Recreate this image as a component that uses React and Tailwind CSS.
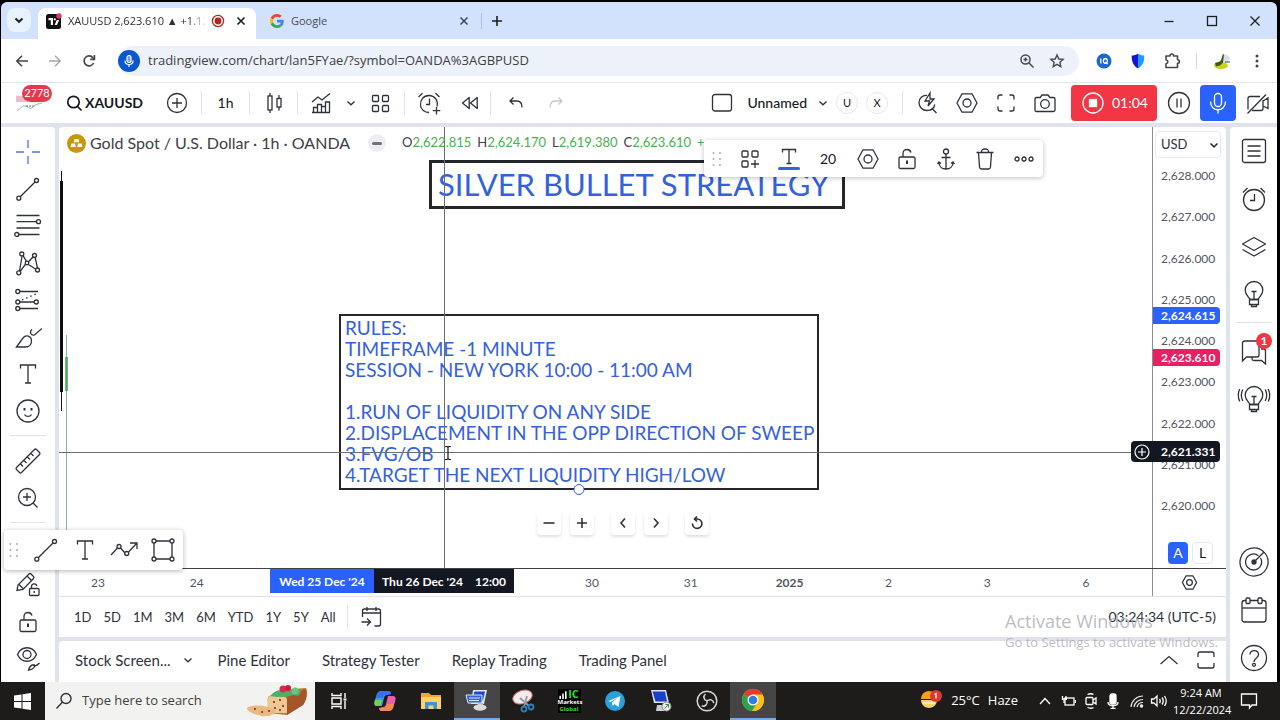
import React from "react";

const INK = "#2f323a";

function Icon({ w = 28, h = 28, sw = 1.3, color = INK, className = "", children }) {
  return (
    <svg
      width={w}
      height={h}
      viewBox={`0 0 ${w} ${h}`}
      fill="none"
      stroke={color}
      strokeWidth={sw}
      className={`shrink-0 ${className}`}
      aria-hidden="true"
    >
      {children}
    </svg>
  );
}

function IconButton({ label, className = "", children }) {
  return (
    <button type="button" aria-label={label} className={`flex shrink-0 items-center justify-center ${className}`}>
      {children}
    </button>
  );
}

function Chevron({ className = "", sw = 1.3, color = INK }) {
  return (
    <Icon w={10} h={8} sw={sw} color={color} className={className}>
      <path d="M1.5 2.5 5 5.8l3.5-3.3" />
    </Icon>
  );
}

function Divider({ className = "" }) {
  return <div className={`h-6 w-px shrink-0 bg-[#e0e3eb] ${className}`} />;
}

/* ---------- shared drawings ---------- */

const HexGear = ({ s = 24 }) => (
  <svg width={s} height={s} viewBox="0 0 24 24" fill="none" stroke={INK} strokeWidth={s < 20 ? 1.8 : 1.3} className="shrink-0" aria-hidden="true">
    <path d="M7 2.8h10l5 9.2-5 9.2H7L2 12z" strokeLinejoin="round" />
    <circle cx="12" cy="12" r="4" />
  </svg>
);

const LineTool = () => (
  <Icon>
    <path d="M6.2 21.8 20.8 7.2" />
    <circle cx="4.8" cy="23.2" r="2" />
    <circle cx="22.5" cy="5.5" r="2" />
  </Icon>
);

const TextTool = () => (
  <Icon>
    <path d="M6.5 8.5V5h15v3.5M14 5v18M11 23h6" />
  </Icon>
);

const Padlock = () => (
  <Icon w={22} h={26}>
    <rect x="3" y="11" width="16" height="11.5" rx="1.5" />
    <path d="M7 11V7.500C7 5 8.800 3.500 11 3.500c2 0 3.500 1.200 4 3" />
    <path d="M11 14.500v3.500" strokeWidth="2" />
  </Icon>
);

const Grip = () => (
  <svg width="10" height="16" viewBox="0 0 10 16" fill="#a9adb8" className="shrink-0" aria-hidden="true">
    {[2, 8, 14].map((y) => (
      <g key={y}>
        <circle cx="1.5" cy={y} r="1" />
        <circle cx="8" cy={y} r="1" />
      </g>
    ))}
  </svg>
);

const Bulb = ({ waves }) => (
  <Icon w={34} h={30}>
    <path d="M13 20.500c-.3-1.800-4.800-4-4.800-9.200C8.200 6.300 12.200 2.500 17 2.500s8.800 3.800 8.800 8.800c0 5.200-4.500 7.400-4.800 9.200z" />
    <path d="M12.500 20.500h9v5h-9zM14.500 25.500v2h5v-2M14.500 12.500h5M17 12.500v8" />
    {waves && <path d="M5.800 5.500c-1.800 3.300-1.800 8 0 11.500M2.800 5c-2 3.500-2 9 0 12.500M28.200 5.500c1.800 3.300 1.800 8 0 11.500M31.200 5c2 3.500 2 9 0 12.500" />}
  </Icon>
);

/* ---------- browser chrome ---------- */

function TabStrip() {
  return (
    <div className="flex h-[37px] items-end rounded-t-md bg-[#d3e2fc]">
      <IconButton label="Search tabs" className="mb-[7px] ml-1.5 size-6 rounded-lg bg-[#e8f1fe]">
        <Chevron sw={2} color="#1f1f1f" />
      </IconButton>
      <div className="ml-[7px] flex h-[31px] w-[218px] items-center rounded-t-lg bg-white pb-[5px] pl-2">
        <svg width="16" height="16" viewBox="0 0 16 16" className="shrink-0" aria-hidden="true">
          <rect y="1" width="15" height="15" rx="2.5" fill="#111" />
          <path d="M2.500 5H7v7H4.800V7.300H2.500zM10.500 7.500 8.700 12h2.200l2.300-5h-2z" fill="#fff" />
          <circle cx="8.800" cy="6.300" r="1.100" fill="#fff" />
          <circle cx="13" cy="3" r="2.700" fill="#e9307c" />
        </svg>
        <span className="ml-1.5 w-[138px] overflow-hidden text-[11px] whitespace-nowrap text-[#303134] [mask-image:linear-gradient(to_right,black_88%,transparent)]">
          XAUUSD 2,623.610 ▲ +1.12
        </span>
        <svg width="14" height="14" viewBox="0 0 14 14" className="ml-[5px] shrink-0" aria-hidden="true">
          <circle cx="7" cy="7" r="5.600" fill="none" stroke="#b3261e" strokeWidth="1.300" />
          <circle cx="7" cy="7" r="3.400" fill="#b3261e" />
        </svg>
        <IconButton label="Close tab" className="ml-2 size-4">
          <Icon w={10} h={10} sw={1.6} color="#1f1f1f"><path d="m1.500 1.500 7 7m0-7-7 7" /></Icon>
        </IconButton>
      </div>
      <div className="ml-[14px] flex h-[31px] w-[212px] items-center pb-[5px]">
        <svg width="14" height="14" viewBox="0 0 48 48" className="shrink-0" aria-hidden="true">
          <path fill="#EA4335" d="M24 9.500c3.540 0 6.710 1.220 9.210 3.600l6.850-6.850C35.900 2.380 30.470 0 24 0 14.620 0 6.510 5.380 2.560 13.220l7.980 6.190C12.430 13.720 17.740 9.500 24 9.500z" />
          <path fill="#4285F4" d="M46.980 24.550c0-1.570-.15-3.090-.38-4.550H24v9.020h12.940c-.58 2.960-2.260 5.480-4.780 7.180l7.730 6c4.510-4.180 7.090-10.360 7.090-17.650z" />
          <path fill="#FBBC05" d="M10.530 28.590c-.48-1.450-.76-2.990-.76-4.590s.27-3.140.76-4.590l-7.980-6.190C.92 16.460 0 20.120 0 24c0 3.880.92 7.540 2.560 10.780z" />
          <path fill="#34A853" d="M24 48c6.480 0 11.930-2.130 15.890-5.810l-7.730-6c-2.150 1.450-4.920 2.300-8.160 2.300-6.260 0-11.570-4.220-13.470-9.910l-7.980 6.190C6.510 42.620 14.620 48 24 48z" />
        </svg>
        <span className="ml-[7px] text-[11px] text-[#474b54]">Google</span>
        <IconButton label="Close tab" className="mr-[9px] ml-auto size-4">
          <Icon w={10} h={10} sw={1.5} color="#3c4660"><path d="m1.500 1.500 7 7m0-7-7 7" /></Icon>
        </IconButton>
        <div className="h-4 w-px bg-[#a8c1ee]" />
      </div>
      <IconButton label="New tab" className="mb-[10px] ml-[7px] size-4">
        <Icon w={12} h={12} sw={1.6} color="#1f1f1f"><path d="M6 1v10M1 6h10" /></Icon>
      </IconButton>
      <div className="mb-[10px] ml-auto flex gap-[27px] pr-[14px]">
        <IconButton label="Minimize" className="size-4"><Icon w={12} h={12} color="#1f1f1f"><path d="M1.500 6.500h9" /></Icon></IconButton>
        <IconButton label="Maximize" className="size-4"><Icon w={12} h={12} color="#1f1f1f"><rect x="1.5" y="1.5" width="9" height="9" /></Icon></IconButton>
        <IconButton label="Close" className="size-4"><Icon w={12} h={12} color="#1f1f1f"><path d="m1.500 1.500 9 9m0-9-9 9" /></Icon></IconButton>
      </div>
    </div>
  );
}

function AddressBar() {
  return (
    <div className="flex h-11 items-center border-b border-[#e3e5e8] bg-white pt-px">
      <IconButton label="Back" className="ml-[13px] size-4">
        <Icon w={14} h={14} sw={1.6} color="#474747"><path d="M13 7H2M7 1.800 1.800 7 7 12.200" /></Icon>
      </IconButton>
      <IconButton label="Forward" className="ml-[17px] size-4">
        <Icon w={14} h={14} sw={1.4} color="#a5a7aa"><path d="M1 7h11M7 1.800 12.200 7 7 12.200" /></Icon>
      </IconButton>
      <IconButton label="Reload" className="ml-[18px] size-4">
        <Icon w={14} h={14} sw={1.7} color="#474747">
          <path d="M11.600 9A5 5 0 1 1 11 3.800L12 5" /><path d="M12.400 1v4.300H8.200" />
        </Icon>
      </IconButton>
      <div className="ml-[21px] flex h-[30px] flex-1 items-center rounded-full bg-[#edf1fa]">
        <span className="flex size-[22px] shrink-0 items-center justify-center rounded-full bg-[#0b57d0]">
          <Icon w={14} h={14} sw={1.2} color="#fff">
            <rect x="5" y="1.5" width="4" height="7" rx="2" fill="#6f9be8" /><path d="M3 6.500c0 5.300 8 5.300 8 0M7 10.500V13" />
          </Icon>
        </span>
        <input
          aria-label="Address"
          defaultValue="tradingview.com/chart/lan5FYae/?symbol=OANDA%3AGBPUSD"
          className="ml-[8px] min-w-0 flex-1 bg-transparent text-[13px] text-[#3c4043] outline-none"
        />
        <Icon w={16} h={16} sw={1.5} color="#474747" className="mr-[14px]">
          <circle cx="6.500" cy="6.500" r="4.500" /><path d="m10 10 4.500 4.500M4.500 6.500h4M6.500 4.500v4" />
        </Icon>
        <Icon w={16} h={16} sw={1.4} color="#474747" className="mr-[14px]">
          <path d="m8 2 1.800 4 4.300.4-3.200 2.900.9 4.300L8 11.400l-3.800 2.200.9-4.300-3.200-2.900L6.200 6z" />
        </Icon>
      </div>
      <svg width="16" height="16" viewBox="0 0 16 16" className="ml-[17px] shrink-0" aria-hidden="true">
        <circle cx="8" cy="8" r="7.500" fill="#1b66d2" />
        <path d="M4.800 5.500v5M9.800 5.500c-3.200 0-3.200 4.800-.5 4.800s2.700-4.800 0-4.800M9.500 9l2 2" stroke="#fff" strokeWidth="1.300" fill="none" />
      </svg>
      <svg width="16" height="16" viewBox="0 0 16 16" className="ml-[18px] shrink-0" aria-hidden="true">
        <path d="M8 .8c2 1.300 4 1.700 6.300 1.800 0 6-1.200 10-6.300 12.800z" fill="#1f9bff" />
        <path d="M8 .8C6 2.100 4 2.500 1.700 2.600c0 6 1.200 10 6.300 12.800z" fill="#1414d8" />
      </svg>
      <Icon w={18} h={18} sw={1.6} color="#474747" className="ml-[17px]">
        <path d="M3 4h4c0-2.600 3.600-2.600 3.600 0h3.900v3.700c2.500 0 2.500 3.600 0 3.600v4.200H3v-3.800c2.500-.4 2.500-3.500 0-3.900z" strokeLinejoin="round" />
      </Icon>
      <div className="ml-[15px] h-4 w-px bg-[#c9d8ef]" />
      <svg width="18" height="18" viewBox="0 0 18 18" className="ml-4 shrink-0" aria-hidden="true">
        <path d="M9 3c3-2 7 0 8 4l-4 4-5-1z" fill="#dcdde6" />
        <ellipse cx="8" cy="13.500" rx="7" ry="3.500" fill="#c9d414" />
        <path d="M2 11c2-1 4 0 6-3l2-6 1 .5-1 8-3 3-4 1z" fill="#3a5a1c" />
        <path d="M12 10h5" stroke="#777aa5" strokeWidth="1.500" />
      </svg>
      <IconButton label="Menu" className="mr-3 ml-[18px] size-4">
        <svg width="4" height="14" viewBox="0 0 4 14" fill="#474747"><circle cx="2" cy="2" r="1.500" /><circle cx="2" cy="7" r="1.500" /><circle cx="2" cy="12" r="1.500" /></svg>
      </IconButton>
    </div>
  );
}

/* ---------- chart application ---------- */

function TopToolbar() {
  return (
    <header className="flex h-10 items-center bg-white font-['Lato',sans-serif] text-[#17191f]">
      <div className="relative flex h-full w-14 shrink-0 items-center">
        <svg width="28" height="18" viewBox="0 0 28 18" className="ml-[15px]" aria-hidden="true">
          <rect x="0" y="2" width="12" height="6" fill="#f2b9c6" />
          <path d="M1 16c4 0 4-5 8-4s5 4 8 1 5-3 9-4" stroke="#8fb7a8" fill="none" />
          <path d="M10 12h8" stroke="#777" strokeDasharray="2 1" />
        </svg>
        <span className="absolute top-0.5 left-[21px] flex h-[17px] w-[30px] items-center justify-center rounded-full bg-[#e63a4c] text-[11px] text-white">2778</span>
      </div>
      <button type="button" className="flex h-full w-24 shrink-0 items-center gap-[3px] pl-[9px] text-sm font-bold">
        <Icon w={16} h={18} sw={1.7} color="#17191f"><circle cx="7.500" cy="8" r="5.700" /><path d="m11.500 12.500 4 4" /></Icon>
        XAUUSD
      </button>
      <IconButton label="Compare symbols" className="w-12">
        <Icon w={22} h={22}><circle cx="11" cy="11" r="9.500" /><path d="M11 6v10M6 11h10" /></Icon>
      </IconButton>
      <Divider />
      <button type="button" className="w-[47px] shrink-0 text-sm">1h</button>
      <Divider />
      <IconButton label="Candles" className="w-[47px]">
        <Icon w={18} h={22}>
          <path d="M5 1v3M5 18v3M14 3v3.500M14 15v3.500" /><rect x="3" y="4" width="4" height="14" /><rect x="12" y="6.500" width="4" height="8.500" />
        </Icon>
      </IconButton>
      <Divider />
      <IconButton label="Indicators" className="w-[46px]">
        <Icon w={22} h={22}>
          <path d="m2 10 6-5 4 3 8-6.500M2 20.500h18M3.500 20.500v-5h4v5M7.500 15.500v-3h4v8M11.500 14.500h4v6M15.500 14.500V10h4v10.500" />
        </Icon>
      </IconButton>
      <IconButton label="Favorite indicators" className="h-8 w-[14px]"><Chevron /></IconButton>
      <IconButton label="Templates" className="w-[46px]">
        <Icon w={20} h={20}>
          {[1.5, 11.5].map((x) => [1.5, 11.5].map((y) => <rect key={`${x}-${y}`} x={x} y={y + 1} width="6" height="6" rx="1" />))}
        </Icon>
      </IconButton>
      <Divider />
      <IconButton label="Create alert" className="w-[47px]">
        <Icon w={26} h={26}>
          <path d="M21 16.500c1.500-6-2.500-11-8-11s-9 4.500-8.500 10c.5 4 4 7 8.500 7M13.500 8.500v6H10M2.500 7 6.500 3.200M23.500 7l-4-3.800M20.500 17v7.500M16.800 20.700h7.500" />
        </Icon>
      </IconButton>
      <IconButton label="Replay" className="w-[38px]">
        <Icon w={20} h={18}><path d="M8.200 3.500v11L1.500 9zM16.200 3.500v11L9.500 9z" strokeLinejoin="round" /></Icon>
      </IconButton>
      <Divider />
      <IconButton label="Undo" className="ml-[2px] w-[46px]">
        <Icon w={16} h={16}><path d="M5.500 2.500 2 6l3.500 3.500M2 6h7c3.500 0 5 2 5 6.500" /></Icon>
      </IconButton>
      <IconButton label="Redo" className="w-[34px]">
        <Icon w={16} h={16} color="#c4c7cf"><path d="M10.500 2.500 14 6l-3.500 3.500M14 6H7c-3.500 0-5 2-5 6.500" /></Icon>
      </IconButton>

      <div className="ml-auto flex h-full items-center">
        <IconButton label="Layout" className="w-6">
          <Icon w={22} h={20}><rect x="1.5" y="1.5" width="19" height="16.500" rx="2.500" /></Icon>
        </IconButton>
        <button type="button" className="ml-[13px] flex items-center gap-[11px] text-sm font-medium">
          Unnamed
          <Chevron />
        </button>
        {["U", "X"].map((k) => (
          <button key={k} type="button" className="ml-2 flex size-[22px] items-center justify-center rounded-full border border-[#e6e8ee] text-[11px]">
            {k}
          </button>
        ))}
        <Divider className="mr-[5px] ml-[14px]" />
        <IconButton label="Quick search" className="w-[39px]">
          <Icon w={24} h={24}>
            <path d="M11 4.500c-4.500-.5-8 2.700-8 7 0 4.500 3.500 8 8 8 4 0 7-2.500 7.800-6M16 17.500l4.500 4.500M14 2 9 10h4.500l-1.500 5L18 8h-4z" />
          </Icon>
        </IconButton>
        <IconButton label="Chart settings" className="w-[39px]"><HexGear /></IconButton>
        <IconButton label="Fullscreen" className="w-[39px]">
          <Icon w={20} h={20}><path d="M2 6.500V4q0-2 2-2h2.500M13.500 2H16q2 0 2 2v2.500M18 13.500V16q0 2-2 2h-2.500M6.500 18H4q-2 0-2-2v-2.500" /></Icon>
        </IconButton>
        <IconButton label="Take a snapshot" className="w-[39px]">
          <Icon w={24} h={20}>
            <path d="M3.500 4.500h3.700L9 2h6l1.800 2.500h3.700q1.500 0 1.500 1.500v11q0 1.500-1.500 1.500h-17Q2 18.500 2 17V6q0-1.500 1.500-1.500z" /><circle cx="12" cy="11" r="4.300" />
          </Icon>
        </IconButton>
        <button type="button" className="ml-[7px] flex h-9 w-[86px] items-center gap-2 rounded bg-[#f23645] pl-[11px] text-sm text-white">
          <Icon w={22} h={22} color="#fff"><circle cx="11" cy="11" r="10" /><rect x="7.500" y="7.500" width="7" height="7" fill="#fff" /></Icon>
          01:04
        </button>
        <IconButton label="Pause recording" className="w-[43px]">
          <Icon w={24} h={24}><circle cx="12" cy="12" r="10.500" /><path d="M10 7.500v9M14 7.500v9" /></Icon>
        </IconButton>
        <IconButton label="Microphone" className="h-9 w-9 rounded bg-[#2962ff]">
          <Icon w={20} h={22} color="#fff"><rect x="6.500" y="1.500" width="7" height="13" rx="3.500" /><path d="M2.500 9.500c0 11 15 11 15 0M10 18v3.500" /></Icon>
        </IconButton>
        <IconButton label="Camera off" className="ml-[3px] w-[38px]">
          <Icon w={24} h={24}><path d="M14 5.500H4q-2 0-2 2v11M6 19.500h9q2 0 2-2V9M17 10l5-3v10.500l-5-2.500M1.500 22.500 20 3.500" /></Icon>
        </IconButton>
      </div>
    </header>
  );
}

const leftToolsTop = [
  ["Cross", <Icon color="#4f74d8" key="i"><path d="M14 2v8M14 18v8M2 14h8M18 14h8" /></Icon>],
  ["Trend line", <LineTool key="i" />],
  ["Fib retracement", (
    <Icon key="i"><path d="M2.500 3.500h23M2.500 9.700h20M2.500 16h23M4.500 22.500h21" /><circle cx="24.500" cy="9.700" r="2" /><circle cx="2.800" cy="22.500" r="2" /></Icon>
  )],
  ["Pattern", (
    <Icon key="i">
      <path d="M5.500 22 8 7.500M9.200 6.800l3.300 5.700M14.500 12.800 19.500 7.500M21 8l2.500 11M22 20.200l-8-5M11.700 15 6.300 22.200" />
      <circle cx="4.800" cy="23.800" r="2" /><circle cx="7.800" cy="5" r="2" /><circle cx="20.500" cy="6.500" r="2" /><circle cx="23.500" cy="21" r="2" /><circle cx="13" cy="14" r="1.800" />
    </Icon>
  )],
  ["Prediction", (
    <Icon key="i">
      <path d="M5.500 5.500H24M5.500 16h15M5.500 22.500H24" /><path d="m8 14 15-6.500" strokeDasharray="1.500 3" />
      <circle cx="3.800" cy="5.500" r="2" /><circle cx="3.800" cy="16" r="2" /><circle cx="22.300" cy="16" r="2" /><circle cx="3.800" cy="22.500" r="2" />
    </Icon>
  )],
  ["Brush", (
    <Icon key="i">
      <path d="M2.500 24 9 15c3-4 8.500-2 8.500 3 0 3.500-2.500 6-6 6z" /><path d="M18 6.500c-3 2.500-1 6.500 2.500 5.500L28 5.500" />
    </Icon>
  )],
  ["Text", <TextTool key="i" />],
  ["Icons", (
    <Icon key="i"><circle cx="14" cy="14" r="11" /><path d="M10.500 17.500c1.500 2.500 5.500 2.500 7 0" /><path d="M10.500 11v2.500M17.500 11v2.500" strokeWidth="2" /></Icon>
  )],
];

function LeftToolbar() {
  return (
    <aside className="flex w-[54px] shrink-0 flex-col items-center rounded-tr bg-white pt-1.5">
      {leftToolsTop.map(([label, icon]) => (
        <IconButton key={label} label={label} className="h-[37px] w-10">{icon}</IconButton>
      ))}
      <div className="my-1.5 h-px w-9 bg-[#e0e3eb]" />
      <IconButton label="Measure" className="h-[37px] w-10">
        <Icon><path d="M2.500 20.500 20.500 2.500q1-1 2 0l3 3q1 1 0 2L7.500 25.500q-1 1-2 0l-3-3q-1-1 0-2zM6.500 17l2.500 2.500M10 13.500l2.500 2.500M13.500 10l2.500 2.500M17 6.500 19.500 9" /></Icon>
      </IconButton>
      <IconButton label="Zoom in" className="h-[37px] w-10">
        <Icon><circle cx="13" cy="13" r="8.500" /><path d="m19 19 4.500 4.500M13 9v8M9 13h8" /></Icon>
      </IconButton>
      <div className="my-1.5 h-px w-9 bg-[#e0e3eb]" />
      <IconButton label="Magnet" className="h-[37px] w-10">
        <Icon><path d="M7 6v8c0 9 14 9 14 0V6h-4v8c0 4-6 4-6 0V6z" /></Icon>
      </IconButton>
      <IconButton label="Lock drawings tool" className="h-[37px] w-10">
        <Icon>
          <path d="M3 19.500 4 14 15 3q1-1 2 0l2.500 2.500q1 1 0 2L9 18.500zM13 5l4.500 4.500M5 13.500l4 4" />
          <rect x="15.500" y="17.500" width="9.500" height="7" rx="1" /><path d="M17.500 17.500v-2c0-3.500 5-3.500 5.300-.5M20.200 20v2" />
        </Icon>
      </IconButton>
      <IconButton label="Lock all drawings" className="h-[37px] w-10"><Padlock /></IconButton>
      <IconButton label="Hide drawings" className="h-[37px] w-10">
        <Icon>
          <path d="M3.500 9.500c4-9 15-9 19 0-4 9-15 9-19 0z" /><circle cx="13" cy="9.500" r="4" />
          <path d="M14.500 25c1-3 2.500-5 4.500-5 3 1 1 4.500-4.500 5zM20 19c0 2.500 2 2.500 5.500-1" />
        </Icon>
      </IconButton>
    </aside>
  );
}

/* Slots without a text lie under the highlighted date range. */
const timeLabels = ["23", "24", "", "", "", "30", "31", "2025", "2", "3", "6"];
const prices = ["2,628.000", "2,627.000", "2,626.000", "2,625.000", "2,624.000", "2,623.000", "2,622.000", "2,621.000", "2,620.000"];

const ruleLines = [
  "RULES:",
  "TIMEFRAME -1 MINUTE",
  "SESSION - NEW YORK 10:00 - 11:00 AM",
  "\u00a0",
  "1.RUN OF LIQUIDITY ON ANY SIDE",
  "2.DISPLACEMENT IN THE OPP DIRECTION OF SWEEP",
  "3.FVG/OB",
  "4.TARGET THE NEXT LIQUIDITY HIGH/LOW",
];

const ohlc = [["O", "2,622.815"], ["H", "2,624.170"], ["L", "2,619.380"], ["C", "2,623.610"]];

function NavButton({ label, className = "", children }) {
  return (
    <IconButton label={label} className={`size-6 rounded bg-white shadow-[0_2px_3px_rgba(0,0,0,0.12)] ${className}`}>
      <Icon w={14} h={14} sw={1.6}>{children}</Icon>
    </IconButton>
  );
}

function DrawingToolbar() {
  return (
    <div className="absolute top-[13px] left-[645px] z-20 flex h-[37px] w-[339px] items-center rounded bg-white pl-2 shadow-[0_1px_5px_rgba(0,0,0,0.25)]">
      <Grip />
      <IconButton label="Drawing templates" className="ml-2 w-[39px]">
        <Icon w={20} h={20}>
          <rect x="2" y="2" width="6" height="6" rx="1" /><rect x="12" y="2" width="6" height="6" rx="1" /><rect x="2" y="12" width="6" height="6" rx="1" /><path d="M15 11v8M11 15h8" />
        </Icon>
      </IconButton>
      <IconButton label="Text color" className="w-[39px] flex-col">
        <Icon w={22} h={20}><path d="M4.500 5.500v-3h13v3M11 2.500v14M8.500 16.500h5" /></Icon>
        <span className="h-[3px] w-[22px] rounded-sm bg-[#3461e0]" />
      </IconButton>
      <button type="button" className="w-10 shrink-0 text-sm text-[#17191f]">20</button>
      <IconButton label="Settings" className="w-[39px]"><HexGear /></IconButton>
      <IconButton label="Lock" className="w-[39px]"><Padlock /></IconButton>
      <IconButton label="Anchor" className="w-[39px]">
        <Icon w={20} h={24}><circle cx="10" cy="4.500" r="2.500" /><path d="M10 7v15M5.500 10.500h9M3 15.500c0 4 3 6.500 7 6.500s7-2.500 7-6.500M1.500 17 3 15l2 1.500M18.500 17 17 15l-2 1.500" /></Icon>
      </IconButton>
      <IconButton label="Remove" className="w-[39px]">
        <Icon w={20} h={24}><path d="M1.500 5.500h17M6.500 5.500c0-3 1-3.500 3.500-3.500s3.500.5 3.500 3.500M3.500 5.500l1 14.500q.2 2 2 2h7q1.800 0 2-2l1-14.500" /></Icon>
      </IconButton>
      <IconButton label="More" className="w-[39px]">
        <Icon w={20} h={8}><circle cx="3" cy="4" r="2" /><circle cx="10" cy="4" r="2" /><circle cx="17" cy="4" r="2" /></Icon>
      </IconButton>
    </div>
  );
}

function ChartCanvas() {
  return (
    <div className="relative min-w-0 flex-1 overflow-hidden text-[#3461e0]">
      <svg width="12" height="441" className="absolute top-0 left-0" aria-hidden="true">
        <path d="M2.500 44v240" stroke="#111" />
        <path d="M2.500 54v211" stroke="#0c0d10" strokeWidth="3" />
        <path d="M7.500 208v233" stroke="#7fb893" />
        <path d="M7.500 230v34" stroke="#43a856" strokeWidth="2.500" />
      </svg>

      <div className="absolute top-[33px] left-[370px] w-[416px] border-3 border-[#24262c] px-[6px] text-[31px] leading-[43px] whitespace-nowrap">
        <p>SILVER BULLET STREATEGY</p>
      </div>

      <div className="absolute top-[187px] left-[280px] w-[480px] border-2 border-[#24262c] pt-px pb-[3px] pl-1 text-[19px] leading-[21px] whitespace-nowrap">
        {ruleLines.map((line, i) => <p key={i}>{line}</p>)}
        <span className="absolute -bottom-[7px] left-1/2 size-[11px] -translate-x-1/2 rounded-full border border-[#3461e0] bg-white" />
      </div>

      <div className="absolute top-[384px] left-[478px] flex gap-[9px]">
        <NavButton label="Zoom out"><path d="M1.500 7h11" /></NavButton>
        <NavButton label="Zoom in"><path d="M2 7h10M7 2v10" /></NavButton>
        <NavButton label="Scroll left" className="ml-2"><path d="M9 2.500 5 7l4 4.500" /></NavButton>
        <NavButton label="Scroll right"><path d="M5 2.500 9 7l-4 4.500" /></NavButton>
        <NavButton label="Reset chart" className="ml-2"><path d="M2.500 7.500A4.700 4.700 0 1 0 7 3H4.500M7 .5 4.500 3 7 5.500" /></NavButton>
      </div>

      <div className="absolute top-0 bottom-0 left-[385px] w-px bg-[#6c6e75]" />
      <div className="absolute top-[325px] right-0 left-0 h-px bg-[#6c6e75]" />
      <Icon w={8} h={16} sw={1.2} color="#17191f" className="absolute top-[318px] left-[385px]">
        <path d="M1 1.500h2l1 1 1-1h2M4 2.500v11M1 14.500h2l1-1 1 1h2" />
      </Icon>

      <div className="absolute top-[6px] left-2 flex h-5 items-center whitespace-nowrap">
        <svg width="19" height="19" viewBox="0 0 19 19" aria-hidden="true">
          <circle cx="9.500" cy="9.500" r="9.500" fill="#c9960c" />
          <path d="m7.500 5-.8 3.300h5.600L11.500 5zM4.500 9.500l-1 3.500h5.300l-.8-3.500zM11 9.500l-.8 3.500h5.300l-1-3.500z" fill="#fff" />
        </svg>
        <h1 className="ml-1 text-base text-[#3d4048]">Gold Spot / U.S. Dollar · 1h · OANDA</h1>
        <span className="ml-[18px] flex size-[18px] items-center justify-center rounded-full bg-[#eceef2]"><span className="h-[3px] w-2.5 rounded-sm bg-[#70737c]" /></span>
        <dl className="ml-4 flex gap-[6px] text-[13px]">
          {ohlc.map(([k, v]) => (
            <div key={k} className="flex"><dt className="text-[#3d4048]">{k}</dt><dd className="text-[#4caf50]">{v}</dd></div>
          ))}
        </dl>
        <span className="ml-1.5 text-[13px] text-[#4caf50]">+</span>
      </div>
      <DrawingToolbar />
    </div>
  );
}

function PriceTag({ className, children }) {
  return <div className={`absolute right-[6px] left-0 rounded-r-sm pl-2 text-xs font-bold text-white ${className}`}>{children}</div>;
}

function PriceAxis() {
  return (
    <div className="relative flex w-[74px] shrink-0 flex-col border-l border-[#8b8d94] text-xs text-[#53565f]">
      <label className="relative mt-1 ml-[2px] flex h-[27px] w-[66px] items-center rounded border border-[#e6e8ee]">
        <select aria-label="Currency" className="w-full appearance-none bg-transparent pl-[5px] text-[13px] text-[#2f323a] outline-none">
          <option>USD</option>
        </select>
        <Chevron sw={1.6} className="absolute right-[1px]" />
      </label>
      <ul className="mt-[10px] flex flex-1 flex-col justify-between pl-2 leading-4">
        {prices.map((p) => <li key={p}>{p}</li>)}
      </ul>
      <div className="mt-7 mb-1 flex gap-1 pl-[15px] text-sm">
        <button type="button" className="h-[22px] w-5 rounded bg-[#2962ff] text-white">A</button>
        <button type="button" className="h-[22px] w-[21px] rounded border border-[#e6e8ee] text-[#17191f]">L</button>
      </div>
      <PriceTag className="top-[180px] bg-[#2962ff] leading-[17px]">2,624.615</PriceTag>
      <PriceTag className="top-[222px] bg-[#e91e63] leading-[17px]">2,623.610</PriceTag>
      <PriceTag className="top-[314px] bg-[#131722] leading-[21px]">
        <button type="button" aria-label="Add alert at price" className="absolute top-0 -left-[22px] flex h-full w-[22px] items-center justify-center rounded-l-sm bg-[#131722]">
          <Icon w={16} h={16} color="#fff" sw={1.2}><circle cx="8" cy="8" r="7" /><path d="M8 4v8M4 8h8" /></Icon>
        </button>
        2,621.331
      </PriceTag>
    </div>
  );
}

function TimeAxis() {
  return (
    <div className="flex h-[29px] border-t border-b border-t-[#3f4249] border-b-[#e0e3eb] text-xs text-[#53565f]">
      <div className="relative flex flex-1 justify-between pr-[66px] pl-[39px] leading-7">
        {timeLabels.map((t, i) => (
          <span key={i} className={`flex w-0 justify-center ${t === "2025" ? "font-bold" : ""}`}>{t}</span>
        ))}
        <div className="absolute top-0 left-[211px] flex h-6 text-xs leading-[26px] font-bold text-white">
          <span className="w-[104px] bg-[#2962ff] text-center">Wed 25 Dec '24</span>
          <span className="flex w-[140px] justify-center gap-3 bg-[#131722]"><span>Thu 26 Dec '24</span><span>12:00</span></span>
        </div>
      </div>
      <div className="flex w-[74px] items-center justify-center border-l border-[#8b8d94]">
        <IconButton label="Axis settings"><HexGear s={17} /></IconButton>
      </div>
    </div>
  );
}

function RangeBar() {
  return (
    <div className="flex h-10 items-center pr-[10px] pl-[15px] text-sm text-[#2f323a]">
      <div className="flex gap-3 text-[13px]">
        {["1D", "5D", "1M", "3M", "6M", "YTD", "1Y", "5Y", "All"].map((r) => <button key={r} type="button">{r}</button>)}
      </div>
      <Divider className="ml-[11px]" />
      <IconButton label="Go to date" className="ml-3">
        <Icon w={24} h={24}><path d="M2.500 12V6q0-2 2-2h14q2 0 2 2v13q0 2-2 2h-4M2.500 8h18M7 2v4M16 2v4M1.500 17H10M7 13.500l3.500 3.500L7 20.500" /></Icon>
      </IconButton>
      <button type="button" className="ml-auto">03:24:34 (UTC-5)</button>
    </div>
  );
}

function BottomTabs() {
  return (
    <div className="flex h-[41px] items-center rounded-tl bg-white pr-[10px] pb-[3px] pl-4 text-[15px] text-[#2f323a]">
      <button type="button">Stock Screen...</button>
      <IconButton label="Screener menu" className="ml-[12px]"><Chevron /></IconButton>
      <div className="ml-[25px] flex gap-8">
        {["Pine Editor", "Strategy Tester", "Replay Trading", "Trading Panel"].map((t) => <button key={t} type="button">{t}</button>)}
      </div>
      <div className="ml-auto flex items-center gap-[17px]">
        <IconButton label="Open panel"><Icon w={20} h={12}><path d="m1.500 10 8.500-7.500L18.500 10" /></Icon></IconButton>
        <IconButton label="Maximize panel"><Icon w={20} h={20}><path d="M2 7V4q0-2 2-2h12q2 0 2 2v3M2 13v3q0 2 2 2h12q2 0 2-2v-3" /></Icon></IconButton>
      </div>
    </div>
  );
}

function FavoritesToolbar() {
  return (
    <div className="absolute bottom-[112px] left-[3px] z-20 flex h-10 w-[179px] items-center rounded bg-white pl-[5px] shadow-[0_1px_5px_rgba(0,0,0,0.3)]">
      <Grip />
      <IconButton label="Trend line" className="ml-[7px] w-[39px]"><LineTool /></IconButton>
      <IconButton label="Text" className="w-[39px]"><TextTool /></IconButton>
      <IconButton label="Path" className="w-[39px]">
        <Icon><path d="m1 19 6.500-7M10.500 12l4.500 5M18.500 16 27 7M20 7h7v6" /><circle cx="9" cy="10.500" r="2" /><circle cx="16.700" cy="17.500" r="2" /></Icon>
      </IconButton>
      <IconButton label="Rectangle" className="w-[39px]">
        <Icon>
          <path d="M7 5h14M7 23h14M5 7v14M23 7v14" />
          {[5, 23].map((x) => [5, 23].map((y) => <circle key={`${x}-${y}`} cx={x} cy={y} r="2" />))}
        </Icon>
      </IconButton>
    </div>
  );
}

function RightSidebar() {
  return (
    <aside className="flex w-[47px] shrink-0 flex-col items-center rounded-tl bg-white pb-px">
      <IconButton label="Watchlist" className="h-12 w-full">
        <Icon><rect x="2.500" y="2.500" width="23" height="23" rx="2" /><path d="M7.500 9h13M7.500 14h13M7.500 19h13" /></Icon>
      </IconButton>
      <IconButton label="Alerts" className="h-12 w-full">
        <Icon><circle cx="14" cy="15" r="10.500" /><path d="M14.500 9v6.500H10M3 7.500 7.500 3M25 7.500 20.500 3" /></Icon>
      </IconButton>
      <IconButton label="Object tree" className="h-12 w-full">
        <Icon><path d="M14 4.500 25.500 11 14 17.500 2.500 11zM2.500 16.500 14 23l11.500-6.500" strokeLinejoin="round" /></Icon>
      </IconButton>
      <IconButton label="Hints" className="h-[46px] w-full"><Bulb /></IconButton>
      <div className="mt-[5px] mb-1 h-px w-9 bg-[#e0e3eb]" />
      <div className="relative">
        <IconButton label="Chats" className="h-12 w-[47px]">
          <Icon><path d="M19 13.500V6q0-2-2-2H5Q2.500 4 2.500 6v18l4-4H17q2 0 2-2zM21 12h2.500q2 0 2 2v13l-4-3.500H14q-2 0-2-1.500v-2" /></Icon>
        </IconButton>
        <span className="absolute top-[6px] right-[5px] flex size-4 items-center justify-center rounded-full bg-[#f23645] text-xs font-bold text-white">1</span>
      </div>
      <IconButton label="Ideas stream" className="h-12 w-full"><Bulb waves /></IconButton>
      <IconButton label="Screeners" className="mt-auto h-12 w-full">
        <Icon w={30} h={30}><path d="M24.900 5A14 14 0 1 0 25 5.100M19.500 8.700A8 8 0 1 0 21.500 11M15 15 25 5" /><circle cx="15" cy="15" r="2" fill={INK} /></Icon>
      </IconButton>
      <IconButton label="Calendar" className="h-12 w-full">
        <Icon><rect x="2" y="4.500" width="24" height="21.500" rx="2.500" /><path d="M2 12h24" /><rect x="6" y="2" width="4" height="5.500" rx="1" fill="#fff" /><rect x="18" y="2" width="4" height="5.500" rx="1" fill="#fff" /></Icon>
      </IconButton>
      <IconButton label="Help" className="h-[47px] w-full">
        <Icon><circle cx="14" cy="14" r="12.500" /><path d="M10 10.500c0-5.500 8.500-5 8.500 0 0 3.500-4.500 3.500-4.500 7.500" /><circle cx="14" cy="20.800" r="1.500" /></Icon>
      </IconButton>
    </aside>
  );
}

/* ---------- operating system bar ---------- */

function TaskItem({ label, active, children }) {
  return (
    <button type="button" aria-label={label} className={`flex h-full w-[46px] items-center justify-center ${active ? "border-b-2 border-[#76a9e8] bg-[#454545]" : ""}`}>
      <svg width="24" height="24" viewBox="0 0 24 24" fill="none" aria-hidden="true">{children}</svg>
    </button>
  );
}

function Taskbar() {
  return (
    <footer className="flex h-[38px] shrink-0 items-center bg-[#1d1c1a] text-white">
      <button type="button" aria-label="Start" className="flex h-full w-[45px] items-center justify-center">
        <svg width="17" height="17" viewBox="0 0 17 17" fill="#fff" aria-hidden="true"><path d="M0 2.500 7.500 1.500V8H0zM8.500 1.300 17 0v8H8.500zM0 9h7.500v6.500L0 14.500zM8.500 9H17v8l-8.500-1.300z" /></svg>
      </button>
      <label className="flex h-full w-[270px] items-center bg-[#f2f2f1]">
        <Icon w={18} h={18} sw={1.4} className="ml-[10px]"><circle cx="11" cy="6.500" r="5" /><path d="M7.500 10 1.500 16.500" /></Icon>
        <input type="text" aria-label="Search" placeholder="Type here to search" className="ml-[9px] w-[150px] bg-transparent text-[13px] text-[#222] outline-none placeholder:text-[#3f3f3f]" />
        <svg width="62" height="34" viewBox="0 0 62 34" className="ml-[14px]" aria-hidden="true">
          <path d="M22 13 36 6l24-2c2 4 1 12-3 17l-16 10-19-2z" fill="#c0703a" />
          <path d="m41 13 19-8c1 5 0 12-3 16L41 31z" fill="#a4552a" />
          <path d="M21 15c4-6 16-6 20 0v14H22z" fill="#efc793" />
          <path d="M1 24c6-4 20-3 28 2 1 5-7 7-13 6S1 28 1 24z" fill="#e9b97f" />
          <path d="M24 12c6-7 14-7 18-4l12-2c2 5-2 7-6 5-7 2-16 3-24 1z" fill="#4fae6c" />
          <path d="M27 18h2M33 16h2M36 22h2M28 24h2M8 25h2M15 28h2M22 27h2M33 26h2" stroke="#9c4a3a" strokeWidth="2" />
          <circle cx="37" cy="5" r="3.500" fill="#d92b4b" /><circle cx="42" cy="4" r="3" fill="#c11f42" /><circle cx="49" cy="7" r="3.500" fill="#6cc383" />
        </svg>
      </label>
      <nav className="ml-px flex h-full">
        <TaskItem label="Task view">
          <path d="M5 4v2.500h9V4M5 20v-2.500h9V20M5 9h9v6H5zM18 4v5M18 12v8" stroke="#fff" strokeWidth="1.400" /><path d="M16.500 10.500h3" stroke="#fff" strokeWidth="2" />
        </TaskItem>
        <TaskItem label="Copilot">
          <path d="M9 2h6c2 0 2.500 1 3 3l-4 1c-2 0-2.500 1-3 3l-2 8H4c-3 0-3-3-2-6l2-6c1-2 2-3 5-3z" fill="#2aa6f0" />
          <path d="M9 2h6c2 0 2.500 1 3 3l-5 1c-2 0-2.500 1-3 3H3l1-4c1-2 2-3 5-3z" fill="#3d6ef0" />
          <path d="M2 11h7l-2 6H4c-3 0-3-3-2-6z" fill="#7ecb5a" />
          <path d="M15 22H9c-2 0-2.500-1-3-3l4-1c2 0 2.500-1 3-3l2-8h5c3 0 3 3 2 6l-2 6c-1 2-2 3-5 3z" fill="#e85fb0" />
          <path d="M15 22H9c-2 0-2.500-1-3-3l5-.5c2 0 2.500-2 3-3.500h7l-1 4c-1 2-2 3-5 3z" fill="#f58a4b" />
        </TaskItem>
        <TaskItem label="File Explorer">
          <path d="M2 4h8l2 2h10v14H2z" fill="#e8ab2e" /><path d="M2 8h20v12H2z" fill="#ffd45c" /><path d="M6 20v-7h12v7h-3.500v-3.500h-5V20z" fill="#3c93d8" />
        </TaskItem>
        <TaskItem label="Remote Desktop" active>
          <path d="M8 2h14l-3 14H6z" fill="#e3e7f1" /><path d="M9.500 3.500H20l-2 9H7z" fill="#1d47c4" /><path d="M1 7h16v8H3z" fill="#2d62d8" stroke="#dfe6f8" /><path d="M4 10h11M4 12.500h10" stroke="#dfe8ff" /><path d="M13 15h5v3h-5z" fill="#b9bcc6" /><ellipse cx="15" cy="19.500" rx="6.500" ry="3.200" fill="#d9dade" />
        </TaskItem>
        <TaskItem label="Snipping Tool">
          <ellipse cx="11.500" cy="8" rx="10" ry="6.500" transform="rotate(-20 11.500 8)" fill="#f1edee" stroke="#d36a6a" /><path d="m9 9 9 8M16 7l-3 11" stroke="#8e9bab" strokeWidth="1.800" /><circle cx="20" cy="18" r="2.500" stroke="#2a7fc0" strokeWidth="1.800" /><circle cx="13" cy="20" r="2.500" stroke="#2a7fc0" strokeWidth="1.800" />
        </TaskItem>
        <button type="button" className="flex h-full w-[46px] items-center justify-center" aria-label="IC Markets Global">
          <span className="flex h-6 w-[23px] flex-col bg-black text-[6px] leading-[7px] font-bold">
            <span className="flex items-end justify-center gap-px text-[11px] leading-[10px] text-[#2be02b]">
              <svg width="8" height="9" viewBox="0 0 7 8" aria-hidden="true"><path d="M1 8V5M3.500 8V3M6 8V1" stroke="#fff" strokeWidth="1.400" /></svg>IC
            </span>
            <span className="text-center">Markets</span>
            <span className="text-center text-[#2be02b]">Global</span>
          </span>
        </button>
        <TaskItem label="Telegram">
          <circle cx="12" cy="12" r="10" fill="#2ba0dc" /><path d="m5.500 12 12-5-2 11-4-3-2 2-.5-3.500 6-5-7.500 4.500z" fill="#fff" />
        </TaskItem>
        <TaskItem label="Remote Connection">
          <path d="M2 1h15l3 13H5z" fill="#dfe3ee" /><path d="M3.500 2.500H16l2 10H6.500z" fill="#1741c9" /><path d="M8 16h10l1 6H7z" fill="#c9ced8" /><circle cx="17.500" cy="17.500" r="4.500" fill="#e8ece8" stroke="#7f8b84" /><path d="m15.500 19.500 4-4M16.500 15.500h3v3" stroke="#3c8d4c" />
        </TaskItem>
        <TaskItem label="OBS Studio">
          <circle cx="12" cy="12" r="9.800" stroke="#d8d8d8" strokeWidth="1.500" />
          <path d="M12 12C8.500 11 8 7 10.500 5M12 12c2.600-2.500 6.400-1.200 6.800 2.200M12 12c.9 3.500-2.200 6-5.300 4.800" stroke="#d8d8d8" strokeWidth="1.500" />
        </TaskItem>
        <TaskItem label="Chrome" active>
          <circle cx="12" cy="12" r="11" fill="#fbc116" /><path d="M12 12 2.500 6.500A11 11 0 0 1 21.500 6.500z" fill="#e33b2e" /><path d="M2.500 6.500A11 11 0 0 0 11 23l5.500-8.500L12 12z" fill="#2ba24c" /><path d="M21.500 6.500H12L17 15l-5.500 8A11 11 0 0 0 21.500 6.500z" fill="#fbc116" /><circle cx="12" cy="12" r="5.500" fill="#fff" /><circle cx="12" cy="12" r="4.300" fill="#2f7bea" />
        </TaskItem>
      </nav>
      <div className="ml-auto flex items-center text-[13px] whitespace-nowrap">
        <svg width="24" height="24" viewBox="0 0 24 24" aria-hidden="true">
          <path d="M2 10a8 8 0 0 1 16 0z" fill="#f8a01d" /><path d="M2 11h16c0 4-3 8-8 8s-8-4-8-8z" fill="#f4d06a" /><path d="M4 14h12" stroke="#fff" /><circle cx="17" cy="7" r="6" fill="#e2372d" /><path d="M15.500 5.500 17 4.500v5" stroke="#fff" fill="none" strokeWidth="1.300" />
        </svg>
        <span className="ml-2">25°C</span>
        <span className="ml-2">Haze</span>
        <Icon w={14} h={10} color="#fff" className="ml-[20px]"><path d="m2 8 5-5.500L12 8" /></Icon>
        <Icon w={16} h={14} color="#fff" className="ml-[8px]"><rect x="5" y="4" width="9" height="7" /><path d="M15.500 6v3M2.500 2v4M6 2v4M2 5h5M4 6v3" /></Icon>
        <Icon w={14} h={16} color="#fff" className="ml-[8px]"><rect x="2" y="4.500" width="7" height="7" rx="1" /><path d="m9 7 3-2v6L9 9M3.500 1.500q3.500-1.500 6 0M3.500 14.500q3.500 1.500 6 0" /></Icon>
        <Icon w={12} h={16} color="#fff" className="ml-[9px]"><rect x="3" y="1" width="6" height="10" rx="2" fill="#fff" /><path d="M1 9c0 5 10 5 10 0M6 13v2.500M3.500 15.500h5" /></Icon>
        <Icon w={14} h={14} sw={1.2} color="#e8e8e8" className="ml-[11px]"><path d="M1 13A12 12 0 0 1 13 2M4 13a9 9 0 0 1 9-7.500M7 13a6 6 0 0 1 6-4.500" /><circle cx="11.500" cy="12" r="1.200" fill="#fff" /></Icon>
        <Icon w={18} h={14} color="#fff" className="ml-[6px]"><path d="M1.500 5H4l3-3v10L4 9H1.500zM9.500 5q1.500 2 0 4M12 3.500q2.500 3.500 0 7M14.500 2q3.500 5 0 10" /></Icon>
        <time className="ml-[5px] w-[56px] text-center text-[11px] leading-[17px]">9:24 AM<br />12/22/2024</time>
        <IconButton label="Notifications" className="mr-[22px] ml-[11px]">
          <Icon w={18} h={18} color="#fff"><path d="M1.500 2h15v11H12l-2.500 3v-3h-8z" /></Icon>
        </IconButton>
      </div>
    </footer>
  );
}

export default function App() {
  return (
    <div className="flex min-h-screen flex-col bg-black font-['Open_Sans','Noto_Sans',sans-serif]">
      <div className="relative mt-0.5 mr-[3px] ml-px flex flex-1 flex-col">
        <TabStrip />
        <AddressBar />
        <TopToolbar />
        <div className="mt-1 flex flex-1 bg-white font-['Lato',sans-serif] shadow-[0_-4px_0_#e0e3eb]">
          <div className="flex min-w-0 flex-1 gap-1 bg-[#e0e3eb]">
            <LeftToolbar />
            <main className="flex min-w-0 flex-1 flex-col">
              <div className="flex flex-1 flex-col rounded-t bg-white">
                <div className="flex flex-1">
                  <ChartCanvas />
                  <PriceAxis />
                </div>
                <TimeAxis />
                <RangeBar />
              </div>
              <div className="h-1" />
              <BottomTabs />
            </main>
            <RightSidebar />
          </div>
        </div>
        <FavoritesToolbar />
        <div className="pointer-events-none absolute right-[51px] bottom-[31px] z-30 w-[221px] whitespace-nowrap text-[#a9abb0]/80">
          <p className="text-lg leading-6">Activate Windows</p>
          <p className="text-[13px] leading-[18px]">Go to Settings to activate Windows.</p>
        </div>
      </div>
      <Taskbar />
    </div>
  );
}
